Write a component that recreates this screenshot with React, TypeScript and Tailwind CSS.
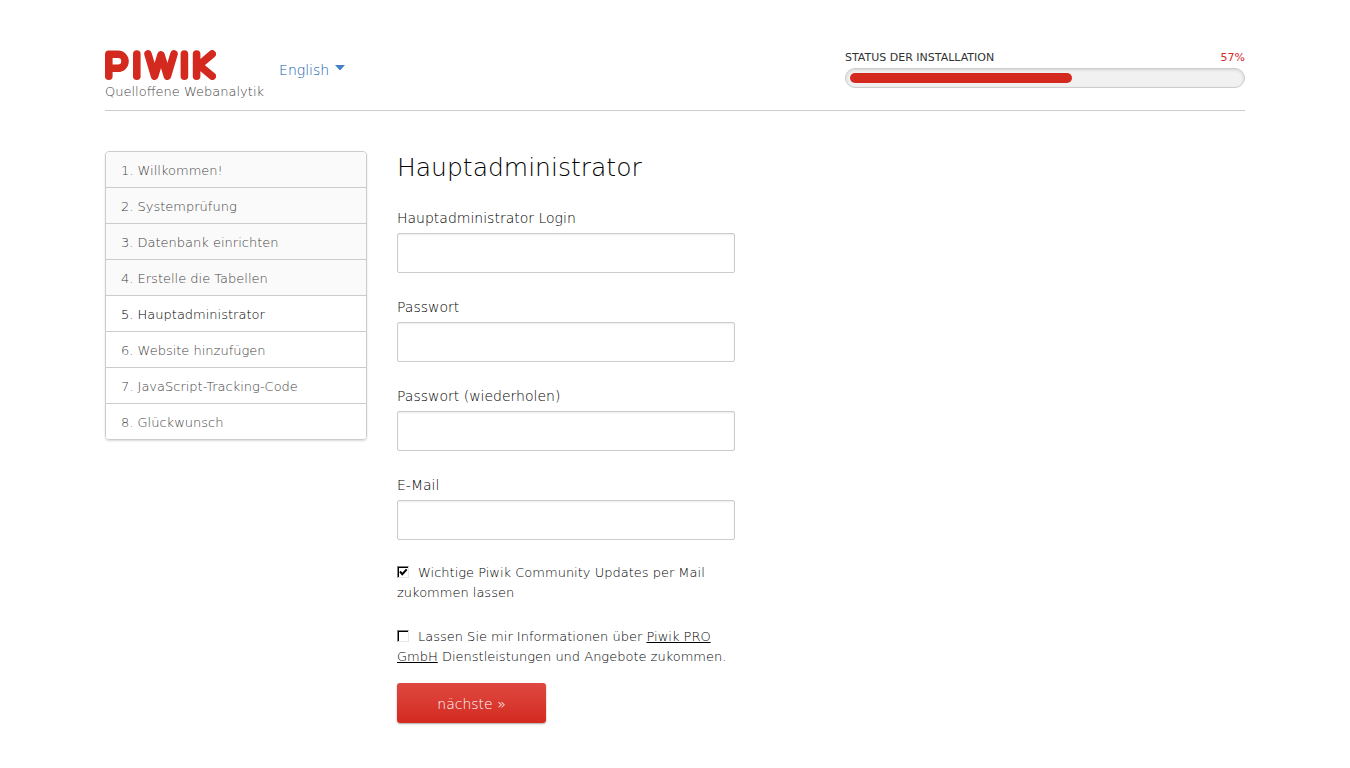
import { useState } from "react";
import type { ReactNode } from "react";

const steps = [
  "Willkommen!",
  "Systemprüfung",
  "Datenbank einrichten",
  "Erstelle die Tabellen",
  "Hauptadministrator",
  "Website hinzufügen",
  "JavaScript-Tracking-Code",
  "Glückwunsch",
];
const currentStep = 4;
const progress = 57;

function Logo() {
  return (
    <svg
      role="img"
      aria-label="Piwik"
      width="111"
      height="30"
      viewBox="0 0 111 30"
      fill="none"
      stroke="#d4291f"
      strokeWidth="7.6"
      strokeLinecap="round"
      strokeLinejoin="round"
      className="block"
    >
      <path d="M3.8 26.2V4.3H13a7 7 0 0 1 0 14H4" />
      <path d="M31.8 4v22.2" />
      <path d="M43 4l6.6 22.2 6.4-21.4 6.4 21.4L69 4" />
      <path d="M79.4 4v22.2" />
      <path d="M91.6 4v22.2M107.2 4L94 15.2l13.2 11" />
    </svg>
  );
}

function Field({ id, label, type }: { id: string; label: string; type: string }) {
  return (
    <div className="mb-[22px]">
      <label htmlFor={id} className="block pb-0.5 text-sm leading-[25px]">
        {label}
      </label>
      <input
        id={id}
        name={id}
        type={type}
        className="block h-10 w-full rounded-xs border border-[#ccc] bg-white px-3 text-sm shadow-[inset_0_1px_2px_rgba(0,0,0,0.08)] outline-none focus:border-[#888]"
      />
    </div>
  );
}

function Option({ id, initial, children }: { id: string; initial: boolean; children: ReactNode }) {
  const [checked, setChecked] = useState(initial);
  return (
    <p className="text-[13px] leading-5">
      <span className="relative mr-[9px] inline-block size-3 align-[-1px]">
        <input
          id={id}
          type="checkbox"
          checked={checked}
          onChange={(e) => setChecked(e.target.checked)}
          className="block size-3 appearance-none border border-t-[#808080] border-r-[#e6e6e6] border-b-[#e6e6e6] border-l-[#808080] bg-white shadow-[inset_1px_1px_0_#000]"
        />
        {checked && (
          <svg viewBox="0 0 12 12" className="pointer-events-none absolute inset-0 size-3" fill="none" stroke="#000" strokeWidth="2">
            <path d="M3 5.5l2.3 2.7L9.7 3.3" />
          </svg>
        )}
      </span>
      <label htmlFor={id}>{children}</label>
    </p>
  );
}

export default function App() {
  return (
    <div className="mx-auto max-w-[1140px] font-['DejaVu_Sans',sans-serif] font-extralight text-black">
      <header className="flex items-start justify-between border-b border-[#ccc] pt-[50px] pb-[7px]">
        <div className="flex items-start gap-[15px]">
          <div>
            <Logo />
            <p className="pt-px text-[13px] leading-[22px] text-[#444]">Quelloffene Webanalytik</p>
          </div>
          <button type="button" className="mt-2.5 flex items-center gap-1.5 text-sm text-[#0f5cab]">
            English
            <svg width="10" height="5" viewBox="0 0 10 5" fill="#4183c4" className="mb-1.5" aria-hidden="true">
              <path d="M0 0h10L5.5 5h-1z" />
            </svg>
          </button>
        </div>
        <div className="w-[400px]">
          <div className="flex justify-between text-[11px] leading-4 font-normal text-[#333] uppercase">
            <span>Status der Installation</span>
            <span className="text-[#d4291f]">{progress}%</span>
          </div>
          <div className="mt-0.5 h-5 rounded-full border border-[#ccc] bg-[#f1f1f1] p-1 shadow-[inset_0_1px_3px_rgba(0,0,0,0.12)]">
            <div className="h-2.5 rounded-full bg-[#d4291f]" style={{ width: `${progress}%` }} />
          </div>
        </div>
      </header>

      <div className="flex items-start gap-[30px] pt-10 pb-11">
        <nav className="w-[262px] shrink-0">
          <ol className="divide-y divide-[#ccc] overflow-hidden rounded border border-[#ccc] text-[13px] text-[#444] shadow-[0_1px_2px_rgba(0,0,0,0.15)]">
            {steps.map((step, i) => (
              <li
                key={step}
                className={
                  i < currentStep
                    ? "bg-[#fafafa] px-[15px] pt-[9px] pb-1.5 leading-5"
                    : i === currentStep
                      ? "bg-white px-[15px] pt-[9px] pb-1.5 leading-5 text-black"
                      : "bg-white px-[15px] pt-[9px] pb-1.5 leading-5"
                }
              >
                {i + 1}. {step}
              </li>
            ))}
          </ol>
        </nav>

        <main className="w-[338px]">
          <h1 className="mb-[21px] text-[25px] leading-[34px]">Hauptadministrator</h1>
          <form onSubmit={(e) => e.preventDefault()}>
            <Field id="login" label="Hauptadministrator Login" type="text" />
            <Field id="password" label="Passwort" type="password" />
            <Field id="password_bis" label="Passwort (wiederholen)" type="password" />
            <Field id="email" label="E-Mail" type="email" />
            <div className="space-y-6 pt-px">
              <Option id="newsletter_piwik" initial={true}>
                Wichtige Piwik Community Updates per Mail zukommen lassen
              </Option>
              <Option id="newsletter_pro" initial={false}>
                Lassen Sie mir Informationen über{" "}
                <a href="#pro" className="underline">
                  Piwik PRO GmbH
                </a>{" "}
                Dienstleistungen und Angebote zukommen.
              </Option>
            </div>
            <button
              type="submit"
              className="mt-4 h-10 w-[149px] rounded-[3px] bg-linear-to-b from-[#de4840] to-[#d4291f] pt-0.5 text-sm text-white shadow-[0_1px_2px_rgba(0,0,0,0.35)]"
            >
              nächste »
            </button>
          </form>
        </main>
      </div>
    </div>
  );
}
